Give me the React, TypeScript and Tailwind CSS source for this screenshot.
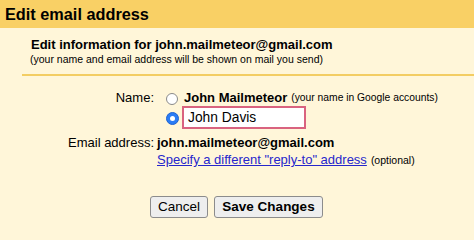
import React from "react";

export default function App() {
  return (
    <div className="w-[474px] h-[240px] overflow-hidden bg-[#fff6d9] text-black" style={{ fontFamily: '"Liberation Sans", Arial, sans-serif' }}>
      <div className="h-[28px] bg-[#f9d065] pl-[5px] flex items-center">
        <h1 className="text-[16.3px] font-bold leading-none">Edit email address</h1>
      </div>
      <div className="pl-[31px] pt-[9px]">
        <div className="text-[13px] font-bold leading-[16px]">Edit information for john.mailmeteor@gmail.com</div>
        <div className="text-[10.5px] leading-[13px] -ml-px">(your name and email address will be shown on mail you send)</div>
      </div>
      <div className="ml-[22px] mt-[8px] h-[2px] bg-[#f3cd63]" />
      <div className="mt-[13px] grid grid-cols-[154px_1fr] gap-x-[3px] text-[13px] leading-[17px]">
        <div className="text-right">Name:</div>
        <div className="flex flex-col">
          <div className="flex items-center h-[17px]">
            <span className="ml-[9px] mt-[3px] w-[12px] h-[12px] rounded-full border border-[#8a8a8a] bg-white" />
            <span className="ml-[6px] font-bold">John Mailmeteor</span>
            <span className="ml-[4px] text-[10.3px]">(your name in Google accounts)</span>
          </div>
          <div className="flex items-center h-[23px]">
            <span className="ml-[9px] mt-[1px] w-[13px] h-[13px] rounded-full bg-[#2a7cf5] flex items-center justify-center border border-[#1f63d1]">
              <span className="w-[5px] h-[5px] rounded-full bg-white" />
            </span>
            <div className="ml-[3px] w-[124px] h-[23px] border-2 border-[#d9637f] bg-white flex items-center pl-[4px] text-[13.8px]">John Davis</div>
          </div>
        </div>
        <div className="text-right mt-[5px]">Email address:</div>
        <div className="mt-[5px] font-bold">john.mailmeteor@gmail.com</div>
        <div />
        <div>
          <a href="#" className="text-[#2626cc] underline">Specify a different "reply-to" address</a>
          <span className="ml-[4px] text-[10.5px]">(optional)</span>
        </div>
      </div>
      <div className="mt-[27px] pl-[150px] flex gap-[6px] text-[13.5px]">
        <button className="h-[22px] w-[58px] bg-[#eeeeee] border border-[#8c8c8c] rounded-[3px] leading-none">Cancel</button>
        <button className="h-[22px] w-[109px] bg-[#eeeeee] border border-[#8c8c8c] rounded-[3px] font-bold leading-none">Save Changes</button>
      </div>
    </div>
  );
}
